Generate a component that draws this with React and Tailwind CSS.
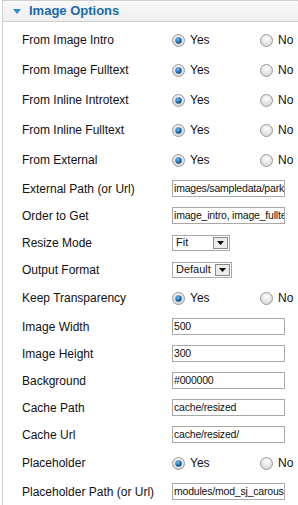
import React from "react";

function Radio({ checked }) {
  return (
    <svg width="13" height="13" viewBox="0 0 13 13" className="shrink-0">
      <defs>
        <radialGradient id={checked ? "rg1" : "rg0"} cx="50%" cy="35%" r="65%">
          <stop offset="0%" stopColor="#ffffff" />
          <stop offset="100%" stopColor="#d4d4d4" />
        </radialGradient>
        <radialGradient id="dot" cx="40%" cy="35%" r="70%">
          <stop offset="0%" stopColor="#7fc4f0" />
          <stop offset="60%" stopColor="#1d6fb0" />
          <stop offset="100%" stopColor="#0d3f6e" />
        </radialGradient>
      </defs>
      <circle cx="6.5" cy="6.5" r="6" fill={`url(#${checked ? "rg1" : "rg0"})`} stroke="#9a9a9a" strokeWidth="1" />
      {checked && <circle cx="6.5" cy="6.5" r="3.2" fill="url(#dot)" />}
    </svg>
  );
}

function RadioRow({ label }) {
  return (
    <div className="flex h-[30px] items-center">
      <div className="w-[150px] shrink-0">{label}</div>
      <div className="flex w-[88px] shrink-0 items-center gap-[5px]">
        <Radio checked />
        <span>Yes</span>
      </div>
      <div className="flex items-center gap-[5px]">
        <Radio checked={false} />
        <span>No</span>
      </div>
    </div>
  );
}

function InputRow({ label, value }) {
  return (
    <div className="flex h-[27px] items-center">
      <div className="w-[150px] shrink-0">{label}</div>
      <div className="flex h-[17px] w-[113px] shrink-0 items-center overflow-hidden whitespace-nowrap border border-[#a9a9a9] bg-white pl-[1px] text-[10.5px] leading-none tracking-[-0.2px]">
        {value}
      </div>
    </div>
  );
}

function SelectRow({ label, value, width }) {
  return (
    <div className="flex h-[27px] items-center">
      <div className="w-[150px] shrink-0">{label}</div>
      <div className={`flex h-[16px] ${width} shrink-0 items-center justify-between border border-[#a9a9a9] bg-white text-[11px] leading-none`}>
        <span className="pl-[3px]">{value}</span>
        <span className="mr-[1px] flex h-[12px] w-[15px] items-center justify-center border border-[#8a8a8a] bg-[#ececec]">
          <svg width="7" height="4" viewBox="0 0 7 4">
            <path d="M0 0 L7 0 L3.5 4 Z" fill="#000" />
          </svg>
        </span>
      </div>
    </div>
  );
}

export default function App() {
  return (
    <div
      className="h-[505px] w-[298px] overflow-hidden bg-white text-[12px] text-[#111]"
      style={{ fontFamily: '"Liberation Sans", Arial, sans-serif' }}
    >
      <div className="ml-[2px] h-full border-l border-[#cfcfcf]">
        <div className="flex h-[22px] items-center border-y border-[#cfcfcf] bg-gradient-to-b from-[#f8f8f8] to-[#eeeeee] pl-[10px]">
          <svg width="8" height="5" viewBox="0 0 8 5" className="mr-[8px]">
            <path d="M0 0 L8 0 L4 5 Z" fill="#2b8ad0" />
          </svg>
          <span className="text-[13px] font-bold text-[#1a6aa8]">Image Options</span>
        </div>
        <div className="pl-[19px] pt-[3px]">
          <RadioRow label="From Image Intro" />
          <RadioRow label="From Image Fulltext" />
          <RadioRow label="From Inline Introtext" />
          <RadioRow label="From Inline Fulltext" />
          <RadioRow label="From External" />
          <InputRow label="External Path (or Url)" value="images/sampledata/parks" />
          <InputRow label="Order to Get" value="image_intro, image_fulltext" />
          <SelectRow label="Resize Mode" value="Fit" width="w-[58px]" />
          <SelectRow label="Output Format" value="Default" width="w-[60px]" />
          <RadioRow label="Keep Transparency" />
          <InputRow label="Image Width" value="500" />
          <InputRow label="Image Height" value="300" />
          <InputRow label="Background" value="#000000" />
          <InputRow label="Cache Path" value="cache/resized" />
          <InputRow label="Cache Url" value="cache/resized/" />
          <RadioRow label="Placeholder" />
          <InputRow label="Placeholder Path (or Url)" value="modules/mod_sj_carousel" />
        </div>
      </div>
    </div>
  );
}
